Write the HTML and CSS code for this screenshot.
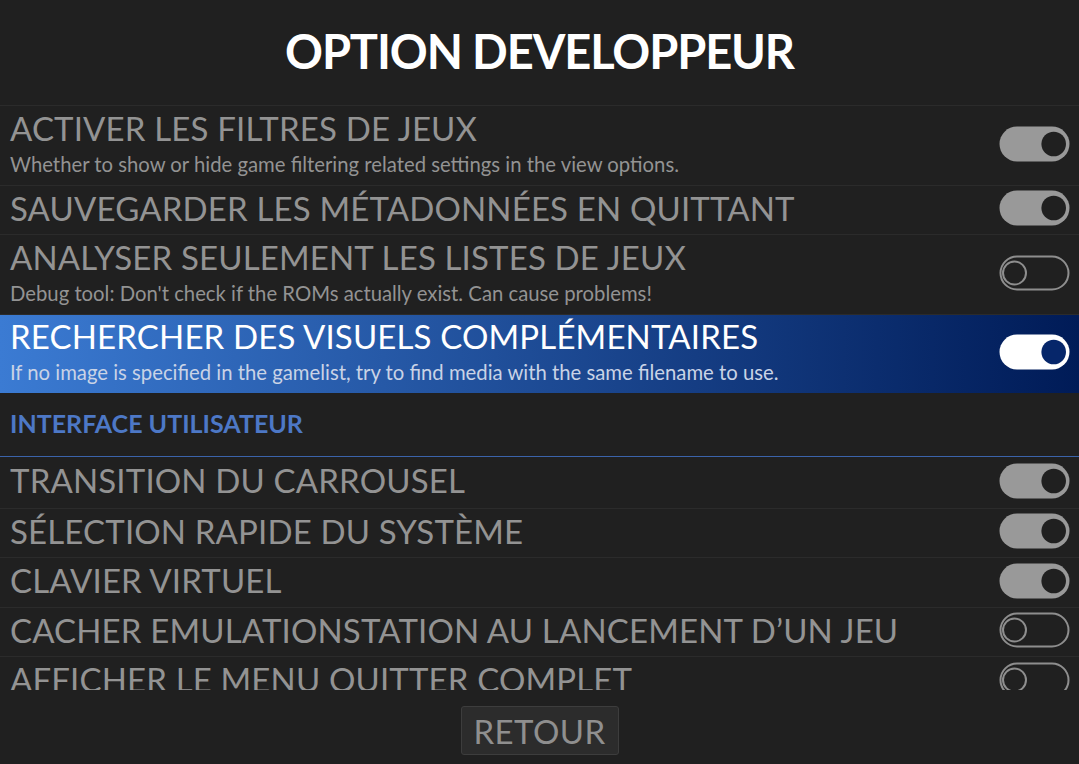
FILE: index.html
```html
<html>
    <head>
        <meta charset='utf-8'/>
        <title>Option developpeur</title>
        <link rel="stylesheet" href="styles.css">
    </head>
    <body>
        <div class="menu">
            <div class="title"><h1>OPTION DEVELOPPEUR</h1></div>

            <div class="list">
                <div class="row tall">
                    <div class="text">
                        <div class="label">ACTIVER LES FILTRES DE JEUX</div>
                        <div class="desc">Whether to show or hide game filtering related settings in the view options.</div>
                    </div>
                    <svg class="switch" viewBox="0 0 72 36"><rect x="0.5" y="0.5" width="70" height="35" rx="17.5" fill="#999"/><circle cx="54.7" cy="18" r="12.3" fill="#202020"/></svg>
                </div>
                <div class="row short">
                    <div class="text">
                        <div class="label">SAUVEGARDER LES MÉTADONNÉES EN QUITTANT</div>
                    </div>
                    <svg class="switch" viewBox="0 0 72 36"><rect x="0.5" y="0.5" width="70" height="35" rx="17.5" fill="#999"/><circle cx="54.7" cy="18" r="12.3" fill="#202020"/></svg>
                </div>
                <div class="row tall">
                    <div class="text">
                        <div class="label">ANALYSER SEULEMENT LES LISTES DE JEUX</div>
                        <div class="desc">Debug tool: Don't check if the ROMs actually exist. Can cause problems!</div>
                    </div>
                    <svg class="switch" viewBox="0 0 72 36"><rect x="1.5" y="1.5" width="68" height="33" rx="16.5" fill="none" stroke="#8e8e8e" stroke-width="2"/><circle cx="15.5" cy="18" r="11.5" fill="none" stroke="#8e8e8e" stroke-width="2"/></svg>
                </div>
                <div class="row tall selected">
                    <div class="text">
                        <div class="label">RECHERCHER DES VISUELS COMPLÉMENTAIRES</div>
                        <div class="desc">If no image is specified in the gamelist, try to find media with the same filename to use.</div>
                    </div>
                    <svg class="switch" viewBox="0 0 72 36"><rect x="0.5" y="0.5" width="70" height="35" rx="17.5" fill="#fff"/><circle cx="54.7" cy="18" r="12.3" fill="#06266a"/></svg>
                </div>

                <div class="group">INTERFACE UTILISATEUR</div>

                <div class="row first">
                    <div class="text"><div class="label">TRANSITION DU CARROUSEL</div></div>
                    <svg class="switch" viewBox="0 0 72 36"><rect x="0.5" y="0.5" width="70" height="35" rx="17.5" fill="#999"/><circle cx="54.7" cy="18" r="12.3" fill="#202020"/></svg>
                </div>
                <div class="row short">
                    <div class="text"><div class="label">SÉLECTION RAPIDE DU SYSTÈME</div></div>
                    <svg class="switch" viewBox="0 0 72 36"><rect x="0.5" y="0.5" width="70" height="35" rx="17.5" fill="#999"/><circle cx="54.7" cy="18" r="12.3" fill="#202020"/></svg>
                </div>
                <div class="row">
                    <div class="text"><div class="label">CLAVIER VIRTUEL</div></div>
                    <svg class="switch" viewBox="0 0 72 36"><rect x="0.5" y="0.5" width="70" height="35" rx="17.5" fill="#999"/><circle cx="54.7" cy="18" r="12.3" fill="#202020"/></svg>
                </div>
                <div class="row short">
                    <div class="text"><div class="label">CACHER EMULATIONSTATION AU LANCEMENT D’UN JEU</div></div>
                    <svg class="switch" viewBox="0 0 72 36"><rect x="1.5" y="1.5" width="68" height="33" rx="16.5" fill="none" stroke="#8e8e8e" stroke-width="2"/><circle cx="15.5" cy="18" r="11.5" fill="none" stroke="#8e8e8e" stroke-width="2"/></svg>
                </div>
                <div class="row">
                    <div class="text"><div class="label">AFFICHER LE MENU QUITTER COMPLET</div></div>
                    <svg class="switch" viewBox="0 0 72 36"><rect x="1.5" y="1.5" width="68" height="33" rx="16.5" fill="none" stroke="#8e8e8e" stroke-width="2"/><circle cx="15.5" cy="18" r="11.5" fill="none" stroke="#8e8e8e" stroke-width="2"/></svg>
                </div>
            </div>

            <div class="footer">
                <div class="button">RETOUR</div>
            </div>
        </div>
    </body>
</html>
```

FILE: styles.css
```css
* {box-sizing: border-box;}
body {margin: 0; background-color: #202020; font-family: Lato, "Open Sans", sans-serif; color: #939393;}
.menu {width: 1079px; height: 764px; display: flex; flex-direction: column;}
.title {height: 105px; display: flex; align-items: center; justify-content: center; padding-bottom: 3px;}
.title h1 {margin: 0; font-size: 47px; letter-spacing: -1.1px; font-weight: bold; color: #ffffff;}

.list {height: 585px; flex-shrink: 0; overflow: hidden; border-top: 1px solid #2b2b2b;}
.row {height: 50px; padding: 0 10px 0 10px; display: flex; align-items: center; justify-content: space-between; border-bottom: 1px solid #2b2b2b;}
.row.short {height: 49px;}
.row.first {height: 52px;}
.row.tall {height: 80px;}
.row.selected {height: 78px; border-bottom: none; background: linear-gradient(to right, #3b7bd3, #001b57);}
.text {padding-bottom: 5px;}
.row.tall .text {padding-bottom: 6px;}
.label {font-size: 33px; line-height: 36px; letter-spacing: 0.15px; white-space: nowrap;}
.desc {margin-top: 6px; font-size: 20.3px; line-height: 24px; white-space: nowrap;}
.selected .label {color: #ffffff;}
.selected .desc {color: #c9d3e6;}
.switch {width: 72px; height: 36px; flex-shrink: 0; margin-right: -2px; margin-bottom: 4px;}

.group {height: 64px; padding: 0 10px 3px 10px; display: flex; align-items: center; border-bottom: 1px solid #3b63aa; font-size: 25px; font-weight: bold; color: #4d78c6;}

.footer {flex: 1; display: flex; justify-content: center; align-items: flex-start; padding-top: 16px;}
.button {width: 158px; height: 49px; display: flex; align-items: center; justify-content: center; background-color: #2c2c2c; border: 1px solid #3d3d3d; border-radius: 3px; font-size: 33px; letter-spacing: 0.4px; color: #8f8f8f;}
```
